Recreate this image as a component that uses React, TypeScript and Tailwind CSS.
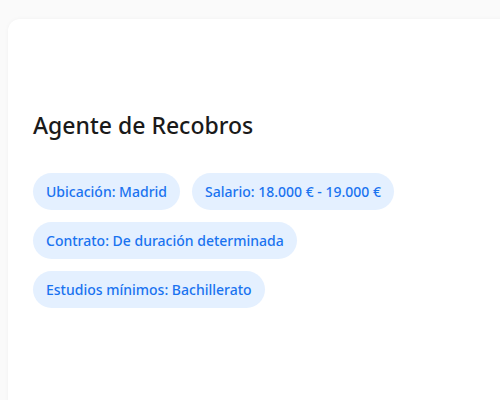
export default function App() {
  const tags = [
    "Ubicación: Madrid",
    "Salario: 18.000 € - 19.000 €",
    "Contrato: De duración determinada",
    "Estudios mínimos: Bachillerato",
  ];

  return (
    <div className="h-[400px] w-[500px] overflow-hidden bg-[#fafafa] pl-2 pt-[19px] font-['Noto_Sans',sans-serif]">
      <div className="h-[420px] w-[520px] rounded-xl bg-white px-[25px] pt-[92px] shadow-[0_0_4px_rgba(0,0,0,0.04)]">
        <h2 className="text-[23px] font-medium leading-7 text-[#1a1a1a]">Agente de Recobros</h2>
        <div className="mt-[34px] flex w-[440px] flex-wrap gap-3">
          {tags.map((t) => (
            <span key={t} className="flex h-[37px] items-center rounded-full bg-[#e4f0ff] px-[13px] text-[14px] font-medium text-[#1a73f0]">
              {t}
            </span>
          ))}
        </div>
      </div>
    </div>
  );
}
